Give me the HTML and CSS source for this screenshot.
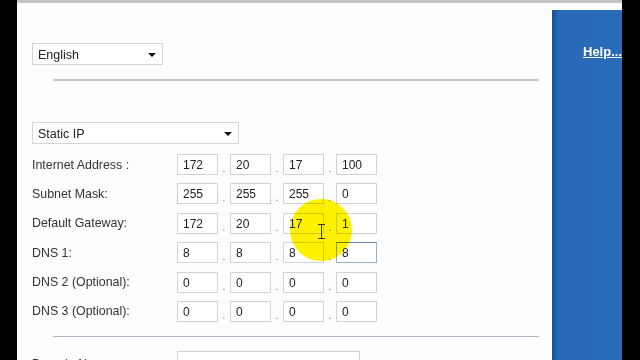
FILE: index.html
```html
<!DOCTYPE html>
<html lang="en">
<head>
    <meta charset="UTF-8">
    <title>Basic Setup</title>
    <link rel="stylesheet" href="styles.css">
</head>
<body>
    <div class="frame">
        <div class="page">
            <div class="content">
                <div class="select lang">English<span class="arrow"></span></div>
                <hr class="sep">

                <div class="select conn">Static IP<span class="arrow"></span></div>

                <div class="fields">
                    <label>Internet Address :</label>
                    <div class="ip">
                        <span class="box">172</span><span class="dot">.</span>
                        <span class="box">20</span><span class="dot">.</span>
                        <span class="box">17</span><span class="dot">.</span>
                        <span class="box">100</span>
                    </div>

                    <label>Subnet Mask:</label>
                    <div class="ip">
                        <span class="box">255</span><span class="dot">.</span>
                        <span class="box">255</span><span class="dot">.</span>
                        <span class="box">255</span><span class="dot">.</span>
                        <span class="box">0</span>
                    </div>

                    <label>Default Gateway:</label>
                    <div class="ip">
                        <span class="box">172</span><span class="dot">.</span>
                        <span class="box">20</span><span class="dot">.</span>
                        <span class="box">17</span><span class="dot">.</span>
                        <span class="box">1</span>
                    </div>

                    <label>DNS 1:</label>
                    <div class="ip">
                        <span class="box">8</span><span class="dot">.</span>
                        <span class="box">8</span><span class="dot">.</span>
                        <span class="box">8</span><span class="dot">.</span>
                        <span class="box focus">8</span>
                    </div>

                    <label>DNS 2 (Optional):</label>
                    <div class="ip">
                        <span class="box">0</span><span class="dot">.</span>
                        <span class="box">0</span><span class="dot">.</span>
                        <span class="box">0</span><span class="dot">.</span>
                        <span class="box">0</span>
                    </div>

                    <label>DNS 3 (Optional):</label>
                    <div class="ip">
                        <span class="box">0</span><span class="dot">.</span>
                        <span class="box">0</span><span class="dot">.</span>
                        <span class="box">0</span><span class="dot">.</span>
                        <span class="box">0</span>
                    </div>
                </div>

                <hr class="sep blue">

                <div class="fields domain">
                    <label>Domain Name:</label>
                    <div class="wide"></div>
                </div>

                <!-- screen recorder cursor highlight -->
                <div class="spot"></div>
                <div class="ibeam"></div>
            </div>
            <div class="side">
                <a href="#">Help...</a>
            </div>
        </div>
    </div>
</body>
</html>
```

FILE: styles.css
```css
body {
    margin: 0;
    background: #000;
    font-family: "Liberation Sans", Arial, sans-serif;
    overflow: hidden;
}
.frame {
    width: 640px;
    height: 360px;
    display: flex;
    padding: 0 18px 0 17px;
    box-sizing: border-box;
}
.page {
    flex: 1;
    display: flex;
    background: #fdfdfd;
    border-top: 3px solid #c4c4c4;
}
.content {
    position: relative;
    flex: 1;
    padding: 40px 13px 0 15px;
}
.side {
    width: 70px;
    margin-top: 7px;
    background: linear-gradient(to right, #1b4f90, #2769b6 6px, #286bb9);
    padding: 32px 0 0 31px;
    box-sizing: border-box;
    overflow: hidden;
    white-space: nowrap;
}
.side a {
    color: #fff;
    font-weight: bold;
    font-size: 13px;
}
.select {
    position: relative;
    height: 22px;
    line-height: 22px;
    border: 1px solid #d4d4d4;
    background: #fff;
    font-size: 12.5px;
    color: #222;
    padding-left: 5px;
    box-sizing: border-box;
}
.lang {
    width: 131px;
}
.conn {
    width: 207px;
}
.arrow {
    position: absolute;
    right: 6px;
    top: 9px;
    border-left: 4px solid transparent;
    border-right: 4px solid transparent;
    border-top: 4px solid #111;
}
.sep {
    margin: 14px 0 0 21px;
    border: none;
    height: 2px;
    background: #c6c6c6;
}
.conn {
    margin-top: 41px;
}
.sep.blue {
    margin-top: 14px;
    height: 1px;
    background: #b4b4cc;
}
.fields {
    display: grid;
    grid-template-columns: 145px auto;
    row-gap: 8.4px;
    margin-top: 10px;
    align-items: center;
}
.fields label {
    font-size: 12.4px;
    color: #333;
}
.ip {
    display: flex;
    align-items: flex-end;
}
.box {
    width: 41px;
    height: 21px;
    line-height: 21px;
    border: 1px solid #d2d2d2;
    background: #fff;
    box-sizing: border-box;
    padding-left: 5px;
    font-size: 12px;
    color: #222;
}
.box.focus {
    border-color: #9aaec4;
    border-top-color: #6c88a8;
}
.dot {
    width: 12px;
    text-align: center;
    font-size: 10px;
    color: #777;
    line-height: 12px;
}
.domain {
    margin-top: 14px;
    align-items: start;
}
.domain label {
    padding-top: 6px;
}
.wide {
    width: 181px;
    height: 21px;
    border: 1px solid #d2d2d2;
    background: #fff;
}
.spot {
    position: absolute;
    left: 273px;
    top: 196px;
    width: 62px;
    height: 62px;
    border-radius: 50%;
    background: #fff200;
    mix-blend-mode: multiply;
}
.ibeam {
    position: absolute;
    left: 304px;
    top: 221px;
    width: 1px;
    height: 15px;
    background: #333;
}
.ibeam::before, .ibeam::after {
    content: "";
    position: absolute;
    left: -3px;
    width: 7px;
    height: 1px;
    background: #333;
}
.ibeam::before { top: 0; }
.ibeam::after { bottom: 0; }
```
